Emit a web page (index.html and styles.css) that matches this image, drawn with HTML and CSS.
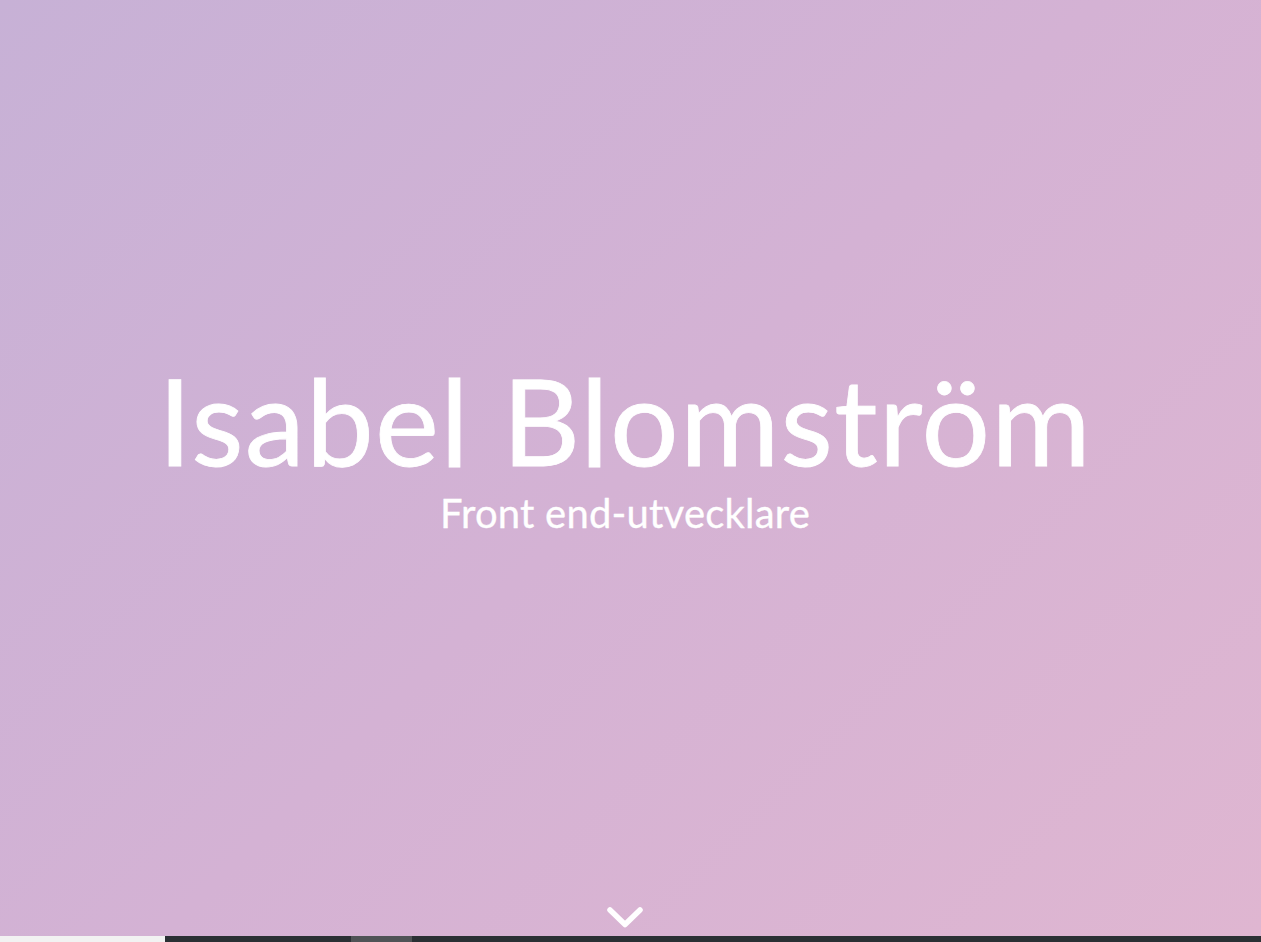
FILE: index.html
```html
<!DOCTYPE html>
<html lang="sv">
<head>
<meta charset="utf-8">
<title>Isabel Blomström</title>
<link rel="stylesheet" href="styles.css">
</head>
<body>
<header class="hero">
  <div class="hero-text">
    <h1 class="hero-title">Isabel Blomström</h1>
    <p class="hero-subtitle">Front end-utvecklare</p>
  </div>
  <a class="scroll-down" href="#next" aria-label="Scrolla ner">
    <svg width="42" height="26" viewBox="0 0 42 26"><path d="M6 4 L21 18.5 L36 4" fill="none" stroke="#fff" stroke-width="5.5" stroke-linecap="round" stroke-linejoin="round"/></svg>
  </a>
</header>
<nav class="strip" id="next">
  <span class="seg seg-light"></span>
  <span class="seg seg-dark"></span>
  <span class="seg seg-gray"></span>
  <span class="seg seg-rest"></span>
</nav>
</body>
</html>
```
FILE: styles.css
```css
html, body {
  margin: 0;
  padding: 0;
}
body {
  font-family: Lato, "Noto Sans", sans-serif;
  color: #fff;
  overflow: hidden;
}
.hero {
  height: 936px;
  background: linear-gradient(135deg, #c7b1d6 0%, #d4b2d4 50%, #dfb6d1 100%);
  display: flex;
  flex-direction: column;
  align-items: center;
  padding-right: 11px;
}
.hero-text {
  flex: 1;
  display: flex;
  flex-direction: column;
  align-items: center;
  justify-content: center;
  padding-bottom: 11px;
}
.hero-title {
  margin: 0;
  font-size: 121px;
  font-weight: 400;
  line-height: 1;
  letter-spacing: 1.2px;
  -webkit-text-stroke: 0.8px #fff;
}
.hero-subtitle {
  margin: 9px 0 0;
  font-size: 40px;
  font-weight: 400;
  line-height: 1.2;
  letter-spacing: 0.2px;
  -webkit-text-stroke: 0.3px #fff;
}
.scroll-down {
  display: block;
  height: 26px;
  margin-bottom: 4px;
}
.strip {
  display: flex;
  height: 6px;
}
.seg { display: block; height: 100%; }
.seg-light { width: 165px; background: #f2f2f2; }
.seg-dark { width: 186px; background: #2b3034; }
.seg-gray { width: 61px; background: #505356; }
.seg-rest { flex: 1; background: #2b3034; }
```
